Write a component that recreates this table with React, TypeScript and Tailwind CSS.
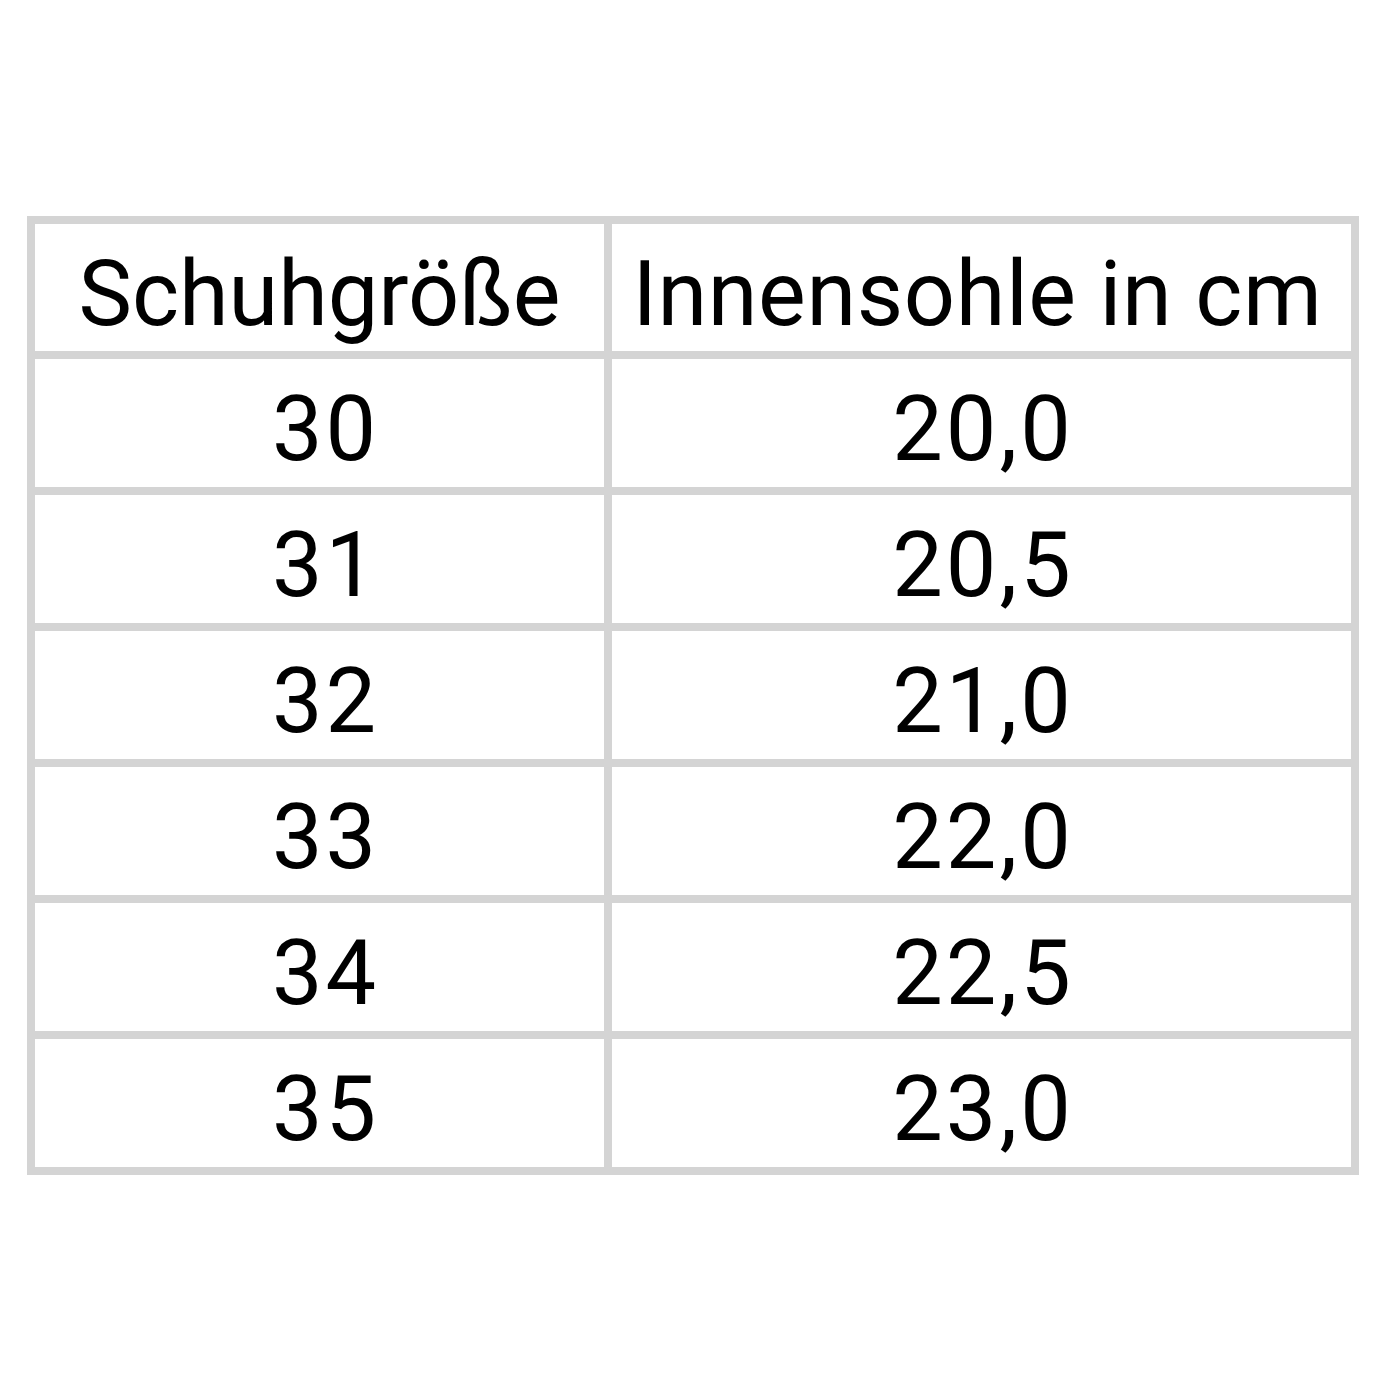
const rows: [string, string][] = [
  ["30", "20,0"],
  ["31", "20,5"],
  ["32", "21,0"],
  ["33", "22,0"],
  ["34", "22,5"],
  ["35", "23,0"],
];

function Cell({ children, className = "" }: { children: React.ReactNode; className?: string }) {
  return (
    <div
      className={`bg-white flex items-center justify-center pt-[14px] text-[90px] leading-none text-black ${className}`}
    >
      {children}
    </div>
  );
}

export default function App() {
  return (
    <div className="w-[1400px] h-[1400px] bg-white pt-[216px] pl-[27px]" style={{ fontFamily: "Roboto, 'Liberation Sans', sans-serif" }}>
      <div className="w-[1332px] grid grid-cols-[569px_739px] gap-[8px] p-[8px] bg-[#d4d4d4]">
        <Cell className="h-[127px]">Schuhgröße</Cell>
        <Cell className="h-[127px] tracking-[0.6px] pr-[8px]">Innensohle in cm</Cell>
        {rows.map(([size, cm]) => (
          <>
            <Cell key={size + "a"} className="h-[128px] tracking-[3px] pl-[12px]">{size}</Cell>
            <Cell key={size + "b"} className="h-[128px] tracking-[3px] pl-[3px]">{cm}</Cell>
          </>
        ))}
      </div>
    </div>
  );
}
